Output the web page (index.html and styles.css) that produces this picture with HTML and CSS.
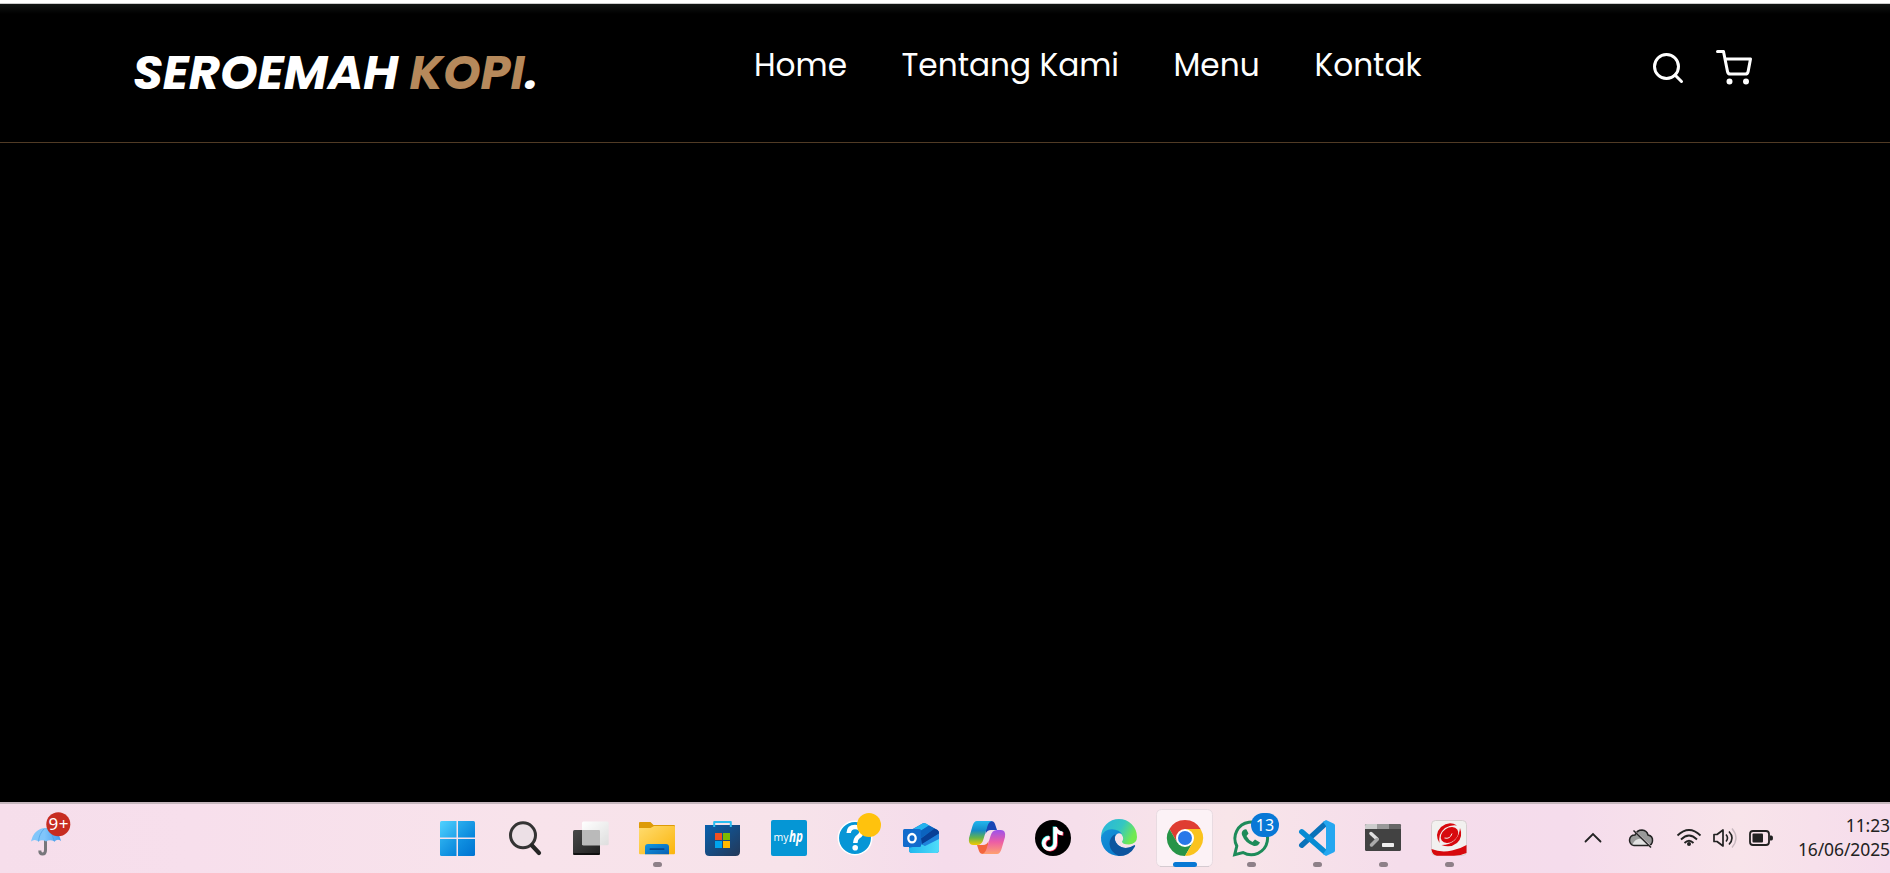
FILE: index.html
```html
<!DOCTYPE html>
<html lang="id">
<head>
<meta charset="utf-8">
<title>Seroemah Kopi</title>
<link rel="stylesheet" href="styles.css">
</head>
<body>
<div class="screen">
  <div class="window-edge"></div>
  <header class="navbar">
    <a class="logo">SEROEMAH <span class="logo-accent">KOPI</span>.</a>
    <nav class="links">
      <a class="link-home">Home</a><a class="link-about">Tentang Kami</a><a class="link-menu">Menu</a><a class="link-contact">Kontak</a>
    </nav>
    <div class="actions">
      <svg viewBox="0 0 24 24"><circle cx="11" cy="11" r="8"/><path d="M21 21l-4.35-4.35"/></svg>
      <svg viewBox="0 0 24 24"><circle cx="9" cy="21" r="1"/><circle cx="20" cy="21" r="1"/><path d="M1 1h4l2.68 13.39a2 2 0 0 0 2 1.61h9.72a2 2 0 0 0 2-1.61L23 6H6"/></svg>
    </div>
  </header>
  <main class="page"></main>
  <footer class="taskbar">
    <div class="weather">
      <svg width="80" height="70" viewBox="0 0 80 70">
        <defs><linearGradient id="um" x2="1"><stop offset="0" stop-color="#83c6fa"/><stop offset=".45" stop-color="#80c5fa"/><stop offset="1" stop-color="#429bef"/></linearGradient></defs>
        <path d="M45.500 25V47Q45.500 51 42.500 51Q39.800 51 39.800 47.500" fill="none" stroke="#77777b" stroke-width="3"/>
        <path d="M31 38.500Q34 25.500 45.500 25Q58 25.500 61 38Q57.500 35.500 54.500 38.500Q50 36 46 38.500Q42 36 38.500 38.500Q34.500 35.500 31 38.500Z" fill="url(#um)"/>
        <path d="M38.500 38.500Q39 31 44 26M54.500 38.500Q53 31 48 27" fill="none" stroke="#4a9fe2" stroke-width=".7"/>
        <circle cx="58.300" cy="21.300" r="12" fill="#c72c20"/>
        <text x="58.500" y="26.900" class="badge-text" font-size="17" textLength="20">9+</text>
      </svg>
    </div>
    <div class="apps">
      <svg class="app" viewBox="0 0 66 70">
        <defs><linearGradient id="wa" x1="0" y1="0" x2="1" y2="1"><stop offset="0" stop-color="#50d2ff"/><stop offset="1" stop-color="#22a3ea"/></linearGradient>
        <linearGradient id="wb" x1="0" y1="0" x2="1" y2="1"><stop offset="0" stop-color="#2aaeee"/><stop offset="1" stop-color="#0683da"/></linearGradient>
        <linearGradient id="wc" x1="0" y1="0" x2="1" y2="1"><stop offset="0" stop-color="#1294e3"/><stop offset="1" stop-color="#0073d1"/></linearGradient></defs>
        <path d="M17.500 18H32.500V34.500H16V19.500Q16 18 17.500 18Z" fill="url(#wa)"/><path d="M34 18H49.500Q51 18 51 19.500V34.500H34Z" fill="url(#wb)"/><path d="M16 36H32.500V53H17.500Q16 53 16 51.500Z" fill="url(#wb)"/><path d="M34 36H51V51.500Q51 53 49.500 53H34Z" fill="url(#wc)"/>
      </svg>
      <svg class="app" viewBox="0 0 66 70"><circle cx="33" cy="32.300" r="12.500" fill="#ece0e6" stroke="#343434" stroke-width="3"/><path d="M42 42.500L49 50" stroke="#252525" stroke-width="4.200" stroke-linecap="round"/></svg>
      <svg class="app" viewBox="0 0 66 70">
        <defs><linearGradient id="tv" x2="1" y2="1"><stop stop-color="#484848"/><stop offset="1" stop-color="#202020"/></linearGradient><linearGradient id="tw" x2="1" y2="1"><stop stop-color="#fff"/><stop offset="1" stop-color="#dedede"/></linearGradient></defs>
        <rect x="17" y="27" width="27" height="25" rx="1.500" fill="url(#tv)"/><path d="M17.500 51H43.500" stroke="#080808" stroke-width="1.500"/><rect x="26" y="18.500" width="26.700" height="23.700" rx="1.500" fill="url(#tw)"/><path d="M26 27H43Q44 27 44 28V42.200H27Q26 42.200 26 41Z" fill="#bababa"/>
      </svg>
      <svg class="app" viewBox="0 0 66 70">
        <defs><linearGradient id="fo" x2="1" y2="1"><stop stop-color="#ffdc70"/><stop offset="1" stop-color="#fbb40a"/></linearGradient><linearGradient id="fb" x2="1" y2="1"><stop stop-color="#1397df"/><stop offset="1" stop-color="#0860b4"/></linearGradient></defs>
        <path d="M18 19H28.500L31.500 22H52Q53 22 53 23V30H17V20Q17 19 18 19Z" fill="#dd9b08"/><path d="M17 25H28.500L32 23H52Q53 23 53 24V50Q53 51.300 52 51.300H18Q17 51.300 17 50Z" fill="url(#fo)"/><path d="M23 51.300V44Q23 41 26 41H44Q47 41 47 44V51.300Z" fill="url(#fb)"/><rect x="27.500" y="45.300" width="15" height="1.700" rx=".8" fill="#06488e"/><rect class="dot" x="31" y="59" width="9" height="5" rx="2.500"/>
      </svg>
      <svg class="app" viewBox="0 0 66 70">
        <defs><linearGradient id="st" x2="1" y2="1"><stop stop-color="#0960ad"/><stop offset="1" stop-color="#233858"/></linearGradient></defs>
        <path d="M17 22H52V48.500Q52 53 47.500 53H21.500Q17 53 17 48.500Z" fill="url(#st)"/><path d="M26.200 24V19H42.800V24" fill="none" stroke="#2cbdf1" stroke-width="2" stroke-linejoin="round"/><path d="M27 30h7v7h-7z" fill="#f25022"/><path d="M35 30h7v7h-7z" fill="#7fba00"/><path d="M27 38h7v7h-7z" fill="#00a4ef"/><path d="M35 38h7v7h-7z" fill="#ffb900"/>
      </svg>
      <svg class="app" viewBox="0 0 66 70"><rect x="17" y="17" width="36" height="36" rx="2" fill="#0596d5"/><text x="19.500" y="38" class="my" textLength="15" lengthAdjust="spacingAndGlyphs">my</text><text x="35" y="38.500" class="hp" textLength="14" lengthAdjust="spacingAndGlyphs">hp</text></svg>
      <svg class="app" viewBox="0 0 66 70"><circle cx="35" cy="35" r="16.700" fill="#0796d6" stroke="#fff" stroke-width="1.500"/><path d="M28.700 30Q29 24 35 24Q41.500 24 41.500 28.800Q41.500 31.500 38.500 33.500Q35.500 35.500 35.300 40" fill="none" stroke="#fff" stroke-width="4.500"/><circle cx="35.200" cy="44.800" r="2.800" fill="#fff"/><circle cx="49" cy="22" r="12" fill="#ffc20d"/></svg>
      <svg class="app" viewBox="0 0 66 70">
        <defs><linearGradient id="ol" x2="1"><stop stop-color="#20b8ee"/><stop offset="1" stop-color="#50dcfa"/></linearGradient></defs>
        <path d="M23 28L36.500 20.500Q38 19.500 39.500 20.500L51.500 27Q53 28 53 30V47Q53 50 50 50H26Q23 50 23 47Z" fill="#1a78cf"/><path d="M24 28L36.500 20.500Q38 19.500 40 20.500L43 22.500L30 31Z" fill="#24b3ee"/><path d="M31 30L43 22.500L48.500 25.500L35 35Z" fill="#0b63bf"/><path d="M35 35.500L48.500 25.500L51.500 27Q53 28 53 30V31L36 41.500Z" fill="#073f96"/><path d="M36 41L53 30.500V37L40 43Z" fill="#1f83dc"/><path d="M53 36V47Q53 50 50 50H26Q23 50 23 47V45L36 41.500L39 43Z" fill="url(#ol)"/><rect x="17" y="26" width="18" height="18" rx="1.500" fill="#126bcc"/><ellipse cx="26" cy="35.200" rx="3.700" ry="4.200" fill="none" stroke="#fff" stroke-width="2.300"/>
      </svg>
      <svg class="app" viewBox="0 0 66 70">
        <defs><linearGradient id="ca" x2="0" y2="1"><stop stop-color="#22b6ee"/><stop offset=".4" stop-color="#158bc7"/><stop offset=".7" stop-color="#65b44b"/><stop offset="1" stop-color="#f5c900"/></linearGradient><linearGradient id="cb" x2="0" y2="1"><stop stop-color="#9b53ec"/><stop offset=".5" stop-color="#ed5da5"/><stop offset="1" stop-color="#ffa170"/></linearGradient></defs>
        <path d="M35 18H39Q42 18 43 21L45 27H39Q35 27 33.500 31Z" fill="#1946b5"/><path d="M35 51H31Q28 51 27 48L25 42H31Q35 42 36.500 38Z" fill="#f3653d"/><path d="M25 18H41Q37 18 35.500 23L31.500 36Q30 42 25 42H21Q16 42 17 35L20.500 23Q22 18 25 18Z" fill="url(#ca)"/><path d="M45 51H29Q33 51 34.500 46L38.500 33Q40 27 45 27H49Q54 27 53 34L49.500 46Q48 51 45 51Z" fill="url(#cb)"/>
      </svg>
      <svg class="app" viewBox="0 0 66 70"><circle cx="35" cy="35" r="18"/><g fill="none" stroke-width="3.600"><path d="M36.500 23.500V39.500A5.700 5.700 0 1 1 30.800 34.200M36.500 24Q38 29.500 44 30" stroke="#25f4ee"/><path d="M38 24.500V40.500A5.700 5.700 0 1 1 32.300 35.200M38 25Q39.500 30.500 45.500 31" stroke="#fe2c55"/><path d="M37.200 24V40A5.700 5.700 0 1 1 31.500 34.700M37.200 24.500Q38.700 30 44.700 30.500" stroke="#fff"/></g></svg>
      <svg class="app" viewBox="0 0 66 70">
        <defs><linearGradient id="ea" x2="1" y2=".4"><stop stop-color="#28b3df"/><stop offset=".6" stop-color="#34c7c1"/><stop offset="1" stop-color="#72e950"/></linearGradient><linearGradient id="eb" x2="1" y2="1"><stop stop-color="#1693d9"/><stop offset="1" stop-color="#0673c8"/></linearGradient></defs>
        <path d="M17 34A18 18 0 0 1 53 34Q53 41 45 41.500Q38 41.500 38 38.500Q40 36 38.500 33Q36 27 29 27Q21 27 17 34Z" fill="url(#ea)"/><path d="M17 34Q20 26 28 26.200Q35 26.500 38 31Q33 28.500 31 34Q30 41 37 44Q44 48 50 44Q44 53 35 53A18 18 0 0 1 17 34Z" fill="url(#eb)"/><path d="M31.500 31Q29 37 34 42Q41 48 50.500 42Q51.500 42 51 43.500Q46 53 35 53Q26 49 25.500 41Q25.500 34 31.500 31Z" fill="#0d559f"/>
      </svg>
      <svg class="app" viewBox="0 0 66 70"><rect x="6.500" y="6.500" width="56" height="57" rx="5" fill="#fcf2f6" stroke="#e8dbe1"/><path d="M10 63.500H59" stroke="#d5cbd1"/>
        <path d="M19.400 26A18 18 0 0 1 50.600 26H35L27.200 39.500Z" fill="#df3d32"/><path d="M19.400 26L27.200 39.500L42.800 39.500L35 53A18 18 0 0 1 19.400 26Z" fill="#279447"/><path d="M50.600 26A18 18 0 0 1 35 53L42.800 39.500L35 26Z" fill="#fac31d"/><circle cx="35" cy="35" r="9" fill="#fff"/><circle cx="35" cy="35" r="7" fill="#2878e9"/><rect x="23" y="59" width="24" height="5" rx="2.500" fill="#0878d4"/>
      </svg>
      <svg class="app" viewBox="0 0 66 70"><path d="M18.700 51.600L20.800 43A16.300 16.300 0 1 1 27 49.500Z" fill="none" stroke="#1d8b59" stroke-width="3"/><path d="M27.500 27Q25 29 26 32Q29 40 38 43Q42 43.500 44 39.500L39 36.500L36.500 39Q32.500 37 30.500 33L32.500 30.500L30.500 26.500Q29 26 27.500 27Z" fill="#1d8b59"/><rect x="35" y="10" width="28" height="24" rx="12" fill="#0878d6"/><text x="49" y="27.800" class="badge-text" font-size="16">13</text><rect class="dot" x="31" y="59" width="9" height="5" rx="2.500"/></svg>
      <svg class="app" viewBox="0 0 66 70"><path d="M19.800 42.200L43 21" stroke="#0a72ba" stroke-width="5.500" stroke-linecap="round"/><path d="M19.800 28.800L43 49" stroke="#078bd3" stroke-width="5.500" stroke-linecap="round"/><path d="M44 17L52 20.700Q53 21.200 53 22.500V47.500Q53 48.800 52 49.300L44 53L41 51L44 47V23L41 19Z" fill="#25a7f0"/><rect class="dot" x="31" y="59" width="9" height="5" rx="2.500"/></svg>
      <svg class="app" viewBox="0 0 66 70"><rect x="17" y="21" width="36" height="27" rx="1.500" fill="#424242"/><path d="M17 26V22.500Q17 21 18.500 21H29V26Z" fill="#ccc"/><path d="M29 21H41V26H29Z" fill="#999"/><path d="M41 21H51.500Q53 21 53 22.500V26H41Z" fill="#676767"/><path d="M23 30.500L29 36" stroke="#e0e0e0" stroke-width="3.500" stroke-linecap="round"/><path d="M29 36.500L23.500 42" stroke="#aaa" stroke-width="3.500" stroke-linecap="round"/><rect x="34" y="40" width="12" height="4" rx=".8" fill="#eee"/><rect class="dot" x="31" y="59" width="9" height="5" rx="2.500"/></svg>
      <svg class="app" viewBox="0 0 66 70"><rect x="17.500" y="17.500" width="35" height="35" rx="4" fill="#f2f1ef" stroke="#d7ced0"/><path d="M17.500 46Q27 50 38 47.500Q46 46 52.500 42V50Q47 52.500 40 52.800H23Q18 52 17.500 46Z" fill="#d7090d"/><path d="M25.500 40Q20 31 27 24Q35 17.500 43 22.500Q37 21.500 31 25Q24 30.500 25.500 40Z" fill="#d7090d"/><path d="M46 25Q49.500 34 43 40Q36 45.500 27.500 42Q36 42 41 37Q45.500 32 46 25Z" fill="#d7090d"/><ellipse cx="35.500" cy="32" rx="9.500" ry="7" transform="rotate(-35 35.500 32)" fill="#d7090d"/><path d="M30.500 35Q36 36.500 38 30.500" fill="none" stroke="#f2f1ef" stroke-width="1"/><rect class="dot" x="31" y="59" width="9" height="5" rx="2.500"/></svg>
    </div>
    <div class="tray">
      <svg width="206" height="70" viewBox="1580 0 206 70" fill="none" stroke="#222" stroke-width="1.800">
        <path d="M1585.500 38.500L1593 31L1600.500 38.500" stroke-linecap="round"/>
        <path d="M1634 42.500Q1629.500 41.500 1629.500 37Q1630 32 1635 32Q1637 27 1642 27Q1647 27.500 1648 32Q1653 33 1652.500 38Q1652 42.500 1648 42.500Z" fill="#999" stroke-width="1.500"/><path d="M1632.500 41.500Q1635 35 1642 35.500Q1645 38 1650 41.500Z" fill="#e2e2e2" stroke="none"/><path d="M1635 28.500L1652 45" stroke="#f0dce6" stroke-width="1.500"/><path d="M1633.500 27.500L1651 44.500" stroke-width="1.500"/>
        <path d="M1677.500 32.500Q1689 21.500 1700.500 32.500M1681 36.500Q1689 28.500 1697 36.500M1684.500 40Q1689 35.500 1693.500 40"/><circle cx="1689" cy="41" r="2" fill="#222" stroke="none"/>
        <path d="M1714 31.500H1717L1723 27V43L1717 38.500H1714Z" stroke-width="1.700" stroke-linejoin="round"/><path d="M1726 31.500Q1729 35 1726 38.500M1729 28.500Q1735 35 1729 41.500" stroke-width="1.600"/><path d="M1732 25.500Q1740 35 1732 44.500" stroke="#c9b9c0" stroke-width="1.400"/>
        <rect x="1750" y="28" width="19" height="14" rx="3"/><rect x="1752.500" y="30.500" width="10.500" height="9" rx="1" fill="#222" stroke="none"/><path d="M1770 32.500H1771.500Q1773 32.500 1773 35Q1773 37.500 1771.500 37.500H1770Z" fill="#222" stroke="none"/>
      </svg>
      <div class="clock"><span>11:23</span><span>16/06/2025</span></div>
    </div>
  </footer>
</div>
</body>
</html>
```
FILE: styles.css
```css
* { box-sizing: border-box; }
body { margin: 0; background: #000; overflow: hidden; }
.screen { display: flex; flex-direction: column; width: 1890px; height: 873px; }
.window-edge { height: 4px; flex: none; background: #fff; border-bottom: 1px solid #ccc; }
.navbar {
  display: flex; align-items: flex-start;
  height: 139px; flex: none; padding: 0 138px 0 133px;
  background: linear-gradient(#111413, #000 10px);
  border-bottom: 1px solid #513b25;
  font-family: Poppins, Inter, sans-serif; color: #fff;
}
.logo { width: 404px; padding-top: 37px; font-size: 48px; line-height: 64px; font-weight: 700; font-style: italic; white-space: nowrap; }
.logo-accent { color: #b6895b; }
.links { display: flex; padding-top: 40px; margin-left: 217px; font-size: 31.200px; line-height: 42px; white-space: nowrap; }
.link-home { width: 147.500px; }
.link-about { width: 272px; }
.link-menu { width: 141px; }
.link-contact { width: 108px; }
.actions { display: flex; gap: 30px; padding-top: 46px; margin-left: auto; }
.actions svg { width: 36px; height: 36px; fill: none; stroke: #fff; stroke-width: 2; stroke-linecap: round; stroke-linejoin: round; overflow: visible; }
.page { flex: 1; background: #000; }
.taskbar {
  display: flex; height: 71px; flex: none; border-top: 2px solid #c5b6bd;
  background: linear-gradient(90deg, #f6deeb 0, #f7dfec 10%, #f8e3eb 28%, #f7e3ea 42%, #f5dceb 50%, #f6dfeb 57%, #f8e5e9 65%, #f5ddeb 74%, #f5dcec 83%, #f8e4ea 92%, #f6dcec 100%);
}
.weather { width: 424px; margin-top: -1px; }
.apps { display: flex; width: 1056px; margin-top: -1px; }
.app { width: 66px; height: 70px; flex: none; }
.dot { fill: #8e8088; }
.badge-text { fill: #fff; font-family: "Noto Sans", sans-serif; text-anchor: middle; }
.my { fill: #fff; font: 11px "Open Sans", sans-serif; }
.hp { fill: #fff; font: italic 700 16px "Open Sans", sans-serif; }
.tray { display: flex; margin-left: 100px; margin-top: -1px; width: 310px; justify-content: space-between; }
.clock { display: flex; flex-direction: column; align-items: flex-end; padding-top: 10px; font: 17.500px/24px "Noto Sans", sans-serif; color: #222; letter-spacing: -0.1px; }
```
